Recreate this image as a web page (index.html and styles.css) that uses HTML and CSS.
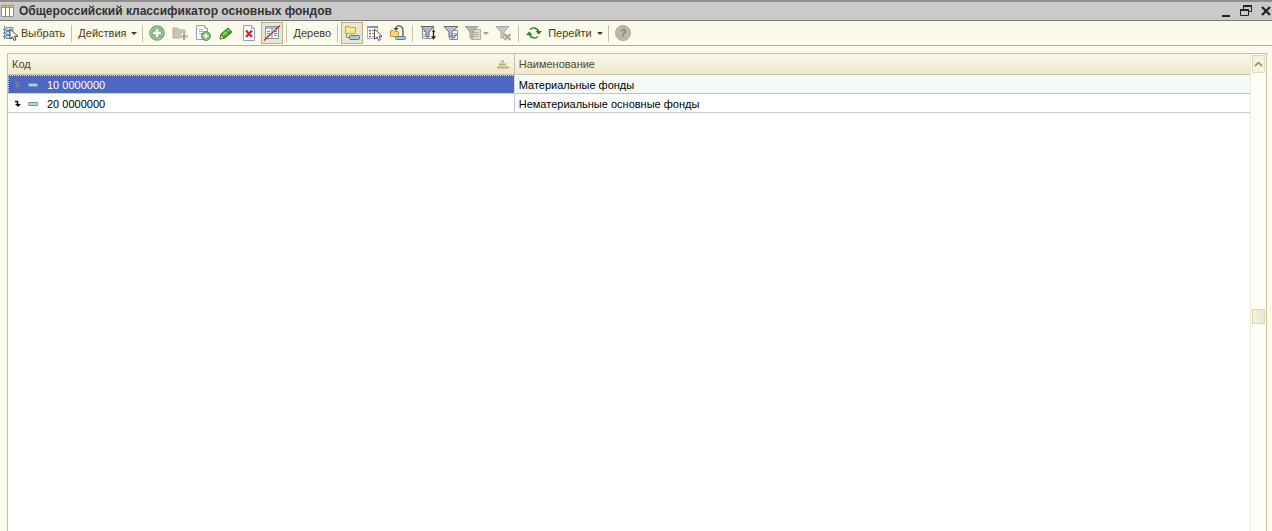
FILE: index.html
```html
<!DOCTYPE html>
<html lang="ru">
<head>
<meta charset="utf-8">
<title>Общероссийский классификатор основных фондов</title>
<link rel="stylesheet" href="styles.css">
</head>
<body>
<header class="titlebar">
  <svg class="title-icon" width="15" height="14" viewBox="0 0 15 14"><path d="M1.500 1.500h12v11h-12z" fill="#fffef4" stroke="#8a958f"/><path d="M1.500 1.500h12v2h-12z" fill="#e4d58f" stroke="#a29459"/><path d="M5.500 2v11M9.500 2v11" stroke="#7d9090"/></svg>
  <h1 class="title">Общероссийский классификатор основных фондов</h1>
  <div class="window-buttons">
    <button class="win" aria-label="Свернуть"><svg width="12" height="12" viewBox="0 0 12 12"><path d="M2 11h8" stroke="#222" stroke-width="2"/></svg></button>
    <button class="win" aria-label="Восстановить"><svg width="12" height="12" viewBox="0 0 12 12" fill="none" stroke="#222"><path d="M3.500 4V1.500h8v5H9M.5 4.500h8v6h-8z"/><path d="M3 1h9M0 5h9" stroke-width="2"/></svg></button>
    <button class="win" aria-label="Закрыть"><svg width="12" height="12" viewBox="0 0 12 12"><path d="M2 2l8 8M10 2l-8 8" stroke="#222" stroke-width="2.200"/></svg></button>
  </div>
</header>

<nav class="toolbar" aria-label="Команды">
  <button class="text-btn choose"><svg width="17" height="16" viewBox="0 0 17 16"><path d="M4 2.500h7v3H4zM4 6.500h6v3H4zM4 10.500h6v3H4z" fill="#c8dce6" stroke="#7193a6"/><path d="M1 4.500h3M1 8h3M1 11.500h3M2.500 1v13" stroke="#648ba2"/><path d="M8 4v10l2.500-2 1.500 3.500 2-1-1.500-3.200H16z" fill="#fff" stroke="#444"/></svg>Выбрать</button>
  <span class="sep"></span>
  <button class="text-btn">Действия<i class="caret"></i></button>
  <span class="sep"></span>
  <button class="icon-btn" aria-label="Добавить"><svg width="16" height="16" viewBox="0 0 16 16"><circle cx="8" cy="8" r="7.200" fill="#82b879" stroke="#5d9264"/><circle cx="8" cy="8" r="6" fill="none" stroke="#a8d29d"/><path d="M8 4v8M4 8h8" stroke="#fff" stroke-width="2.600"/></svg></button>
  <button class="icon-btn" aria-label="Новая группа" disabled><svg width="16" height="16" viewBox="0 0 16 16"><path d="M1 3h5l1 2h6v8H1z" fill="#c6c4b6" stroke="#b3b1a2"/><path d="M12 8v7M8.500 11.500h7" stroke="#fcfbee" stroke-width="4"/><path d="M12 8v7M8.500 11.500h7" stroke="#aaa89b" stroke-width="2"/></svg></button>
  <button class="icon-btn" aria-label="Скопировать"><svg width="16" height="16" viewBox="0 0 16 16"><path d="M1.500.5h8l3 3v11h-11z" fill="#fff" stroke="#8ba2b4"/><path d="M9.500.5v3h3M4 4.500h4M4 6.500h6M4 8.500h4" fill="none" stroke="#9fb4c3"/><circle cx="11" cy="11" r="4.500" fill="#85b878" stroke="#629961"/><path d="M11 8.500v5M8.500 11h5" stroke="#fff" stroke-width="1.700"/></svg></button>
  <button class="icon-btn" aria-label="Изменить"><svg width="16" height="16" viewBox="0 0 16 16"><path d="M2 14l1-5 7-6 4 4-7 6z" fill="#43a52d" stroke="#347c26"/><path d="M5 10l6-5" stroke="#8cdb63" stroke-width="2"/><path d="M2 14l1-4 3 3z" fill="#f0dc9b" stroke="#66622d" stroke-width=".6"/><path d="M8 5l4 4" stroke="#28761c"/></svg></button>
  <button class="icon-btn" aria-label="Удалить"><svg width="16" height="16" viewBox="0 0 16 16"><path d="M2.500.5h8l3 3v12h-11z" fill="#fff" stroke="#89a3b6"/><path d="M10.500.5v3h3" fill="#dde8ef" stroke="#89a3b6"/><path d="M5 5.500l6 6.500M11 5.500L5 12" stroke="#c52d2d" stroke-width="2.200"/></svg></button>
  <button class="icon-btn pressed" aria-pressed="true" aria-label="Режим просмотра"><svg width="18" height="16" viewBox="0 0 18 16"><path d="M2.500 1.500h13v12h-13z" fill="#f6fafc" stroke="#8298a6"/><path d="M3 3h12" stroke="#a7bfce" stroke-width="2"/><path d="M9 3v10M4 6.500h3M11 6.500h3M4 8.500h3M11 8.500h3M4 10.500h3M11 10.500h3" stroke="#718da0"/><path d="M1 15.500L17 .5" stroke="#c43737" stroke-width="1.500"/></svg></button>
  <span class="sep"></span>
  <button class="text-btn tree">Дерево</button>
  <span class="sep"></span>
  <button class="icon-btn pressed" aria-pressed="true" aria-label="Иерархический просмотр"><svg width="18" height="16" viewBox="0 0 18 16"><path d="M2.500 1.500h4l1 1h5v6h-10z" fill="#f8df80" stroke="#c7a447"/><path d="M3 4.500h9" stroke="#fff1b8"/><path d="M3.500 9v3.500H7" fill="none" stroke="#8d8c76"/><rect x="6.500" y="10.500" width="10" height="4" rx="1" fill="#a8c8db" stroke="#517b96"/></svg></button>
  <button class="icon-btn" aria-label="Выбрать из списка"><svg width="17" height="16" viewBox="0 0 17 16"><path d="M1.500 1.500h10v12h-10z" fill="#fff" stroke="#a6b4c1"/><path d="M1 2h11" stroke="#8298b3" stroke-width="2"/><path d="M3 5.500h2M3 8.500h2M3 11.500h2" stroke="#c74b4b" stroke-width="1.500"/><path d="M6 5.500h3M6 8.500h3M6 11.500h3" stroke="#678baa"/><path d="M8.500 4v10l2.500-2 1.500 3.500 2-1-1.500-3.200h3z" fill="#fff" stroke="#555"/></svg></button>
  <button class="icon-btn" aria-label="Переместить в группу"><svg width="16" height="16" viewBox="0 0 16 16"><path d="M.5 5.500h3l1 1h4v5h-8z" fill="#f7db73" stroke="#bb983d"/><path d="M6 4c0-5 7-4 7 2v6" fill="none" stroke="#555" stroke-width="1.300"/><path d="M3.500 3h5L6 6z" fill="#444"/><rect x="5.500" y="11.500" width="10" height="3" rx="1" fill="#a5c7da" stroke="#53809b"/></svg></button>
  <span class="sep"></span>
  <button class="icon-btn" aria-label="Отбор и сортировка"><svg width="16" height="16" viewBox="0 0 16 16"><path d="M2.500 3.500h11v10h-11z" fill="#fff" stroke="#8097a6"/><path d="M3 6.500h3M3 9.500h4M3 11.500h4" stroke="#9bb3c2"/><path d="M1 1.500h13L9 7V12H6V7z" fill="#b4bcc0" stroke="#596770"/><path d="M13.500 5v8" stroke="#333" stroke-width="1.500"/><path d="M11 11h5l-2.500 4zM11.500 7h4l-2-2z" fill="#333"/></svg></button>
  <button class="icon-btn" aria-label="Отбор по значению"><svg width="16" height="16" viewBox="0 0 16 16"><path d="M6.500 5.500h8v9h-8z" fill="#fff" stroke="#7a98ad"/><path d="M8 8.500h5M8 10.500h5" stroke="#97b4c6"/><path d="M1 1.500h14L9 7V12H6V7z" fill="#b8c0c4" stroke="#5e6d76"/><path d="M9 14l5-5" stroke="#467da4" stroke-width="1.500"/></svg></button>
  <button class="icon-btn with-caret" aria-label="История отборов" disabled><svg width="16" height="16" viewBox="0 0 16 16"><path d="M6.500 4.500h9v10h-9z" fill="#dfded0" stroke="#b3b1a5"/><path d="M8 7.500h6M8 9.500h6M8 11.500h6" stroke="#b3b1a5"/><path d="M0 1.500h13L8 7V13H5V7z" fill="#b5b4aa" stroke="#a6a59b"/></svg><i class="caret faded"></i></button>
  <button class="icon-btn" aria-label="Отключить отбор" disabled><svg width="16" height="16" viewBox="0 0 16 16"><path d="M0 1.500h13L8 7V13H5V7z" fill="#c3c8ca" stroke="#a2a9ac"/><path d="M8.500 9l6 6M14.500 9l-6 6" stroke="#ada095" stroke-width="2"/></svg></button>
  <span class="sep"></span>
  <button class="icon-btn" aria-label="Обновить"><svg width="16" height="16" viewBox="0 0 16 16"><path d="M4 4.500C6 2.500 11 2 12.500 6.500M12 11.500C10 13.500 5 14 3.500 9.500" fill="none" stroke="#398b33" stroke-width="1.700"/><path d="M9.500 6h6.500L12.800 9.500zM0 10h6.500L3.200 6.500z" fill="#2f7c2b"/></svg></button>
  <button class="text-btn goto">Перейти<i class="caret"></i></button>
  <span class="sep"></span>
  <button class="icon-btn help" aria-label="Справка" disabled><span class="help-mark">?</span></button>
</nav>

<main class="workspace">
  <section class="list">
    <div class="table-area">
      <table class="grid">
        <thead><tr>
          <th class="code-col" scope="col"><div class="head">Код<svg width="14" height="9" viewBox="0 0 14 9"><path d="M5 1.500h3M3 4.500h7M1 7.500h12" stroke="#b9b276" stroke-width="2"/></svg></div></th>
          <th scope="col">Наименование</th>
        </tr></thead>
        <tbody>
          <tr class="selected"><td><div class="code"><svg width="8" height="8" viewBox="0 0 8 8"><path d="M1 1.500h2.500V5" fill="none" stroke="#8c7f72" stroke-width="1.500"/><path d="M1 4h6L4 7z" fill="#8c7f72"/></svg><i class="item"></i>10 0000000</div></td><td>Материальные фонды</td></tr>
          <tr><td><div class="code"><svg width="8" height="8" viewBox="0 0 8 8"><path d="M1 1.500h2.500V5" fill="none" stroke="#111" stroke-width="1.500"/><path d="M1 4h6L4 7z" fill="#111"/></svg><i class="item"></i>20 0000000</div></td><td>Нематериальные основные фонды</td></tr>
        </tbody>
      </table>
    </div>
    <div class="scrollbar">
      <button class="scroll-up" aria-label="Вверх"><svg width="9" height="6" viewBox="0 0 9 6"><path d="M1 5l3.500-3.500L8 5" fill="none" stroke="#8c8560" stroke-width="1.500"/></svg></button>
      <span class="track-before"></span>
      <span class="thumb"></span>
      <span class="track-after"></span>
    </div>
  </section>
</main>
</body>
</html>
```

FILE: styles.css
```css
* { box-sizing: border-box; }

body {
  margin: 0;
  height: 100vh;
  display: flex;
  flex-direction: column;
  overflow: hidden;
  background: #fcfaeb;
  color: #000;
  font: 11px/14px "Liberation Sans", Arial, sans-serif;
}

button {
  margin: 0;
  padding: 0;
  border: 0;
  background: none;
  color: inherit;
  font: inherit;
}

svg { display: block; flex: none; }

.titlebar {
  display: flex;
  align-items: center;
  height: 21px;
  flex: none;
  border-top: 2px solid #8f8f8f;
  border-bottom: 1px solid #777;
  background: #cacaca;
}

.title {
  flex: 1;
  margin: 0 0 0 4px;
  color: #333;
  font-size: 12px;
  font-weight: bold;
  white-space: nowrap;
}

.window-buttons { display: flex; gap: 8px; }
.win { width: 12px; height: 12px; }

.toolbar {
  display: flex;
  align-items: center;
  height: 25px;
  flex: none;
  padding-left: 2px;
  border-bottom: 1px solid #b5b18e;
  color: #4a3c10;
}

.text-btn {
  display: flex;
  align-items: center;
  height: 22px;
  padding: 0 2px 0 3px;
  white-space: nowrap;
}

.choose { padding: 0 3px 0 0; gap: 2px; }
.tree { padding: 0 3px 0 4px; }

.icon-btn {
  display: flex;
  align-items: center;
  justify-content: center;
  width: 23px;
  height: 22px;
}

.pressed {
  width: 22px;
  border: 1px solid #b9b18a;
  background: #ebe6cf;
}

.with-caret { width: 30px; }

.sep {
  width: 1px;
  height: 17px;
  margin: 0 3px;
  background: #c6c1a4;
}

.caret {
  margin-left: 4px;
  border: 3px solid transparent;
  border-top-color: #4a3c10;
  border-bottom: 0;
}

.goto .caret { margin-left: 5px; }

.with-caret .faded { margin-left: 2px; border-top-color: #a89e70; }

.help-mark {
  width: 16px;
  height: 16px;
  border: 1px solid #b0a9a1;
  border-radius: 50%;
  background: #bdb7b0;
  color: #8b827b;
  font-weight: bold;
  text-align: center;
}

.workspace {
  flex: 1;
  display: flex;
  min-height: 0;
  padding: 7px 5px 0 7px;
}

.list {
  flex: 1;
  display: flex;
  border: 1px solid #c5c1a5;
  border-bottom: 0;
  background: #fff;
}

.table-area { flex: 1; }

.grid {
  width: 100%;
  table-layout: fixed;
  border-collapse: separate;
  border-spacing: 0;
}

.grid th {
  height: 21px;
  padding: 0 4px;
  border-bottom: 1px solid #c9c4a3;
  background: linear-gradient(#f9f8ee, #eee9cc);
  color: #58481c;
  font-weight: normal;
  text-align: left;
}

.grid .code-col { width: 40.8%; border-right: 1px solid #c5c1a5; }
.head { display: flex; align-items: center; justify-content: space-between; }

.grid td {
  height: 19px;
  padding: 1px 4px 0;
  border-bottom: 1px solid #c9ccd0;
}

.grid td:first-child { border-right: 1px solid #c9ccd0; }
.selected td { background: #f4faf8; border-bottom-color: #b0c7da; }

.grid .selected td:first-child {
  background: #4d68c0;
  color: #fff;
  outline: 1px dotted #dfe5ff;
  outline-offset: -1px;
}

.code { display: flex; align-items: center; padding-left: 2px; }

.item {
  width: 10px;
  height: 4px;
  margin: 0 9px 0 6px;
  border: 1px solid #6e94aa;
  border-radius: 1px;
  background: #b7d0df;
}

.scrollbar {
  display: flex;
  flex-direction: column;
  width: 16px;
  padding: 1px;
  border-left: 1px solid #eeebd5;
  background: #fffffa;
}

.scroll-up {
  display: flex;
  align-items: center;
  justify-content: center;
  height: 18px;
  border: 1px solid #dedbb9;
  background: #f5f2df;
}

.track-before { flex: 237; }
.track-after { flex: 207; }

.thumb {
  height: 15px;
  border: 1px solid #dcd8b3;
  background: linear-gradient(90deg, #f5f3e2, #ebe7ca);
}
```
